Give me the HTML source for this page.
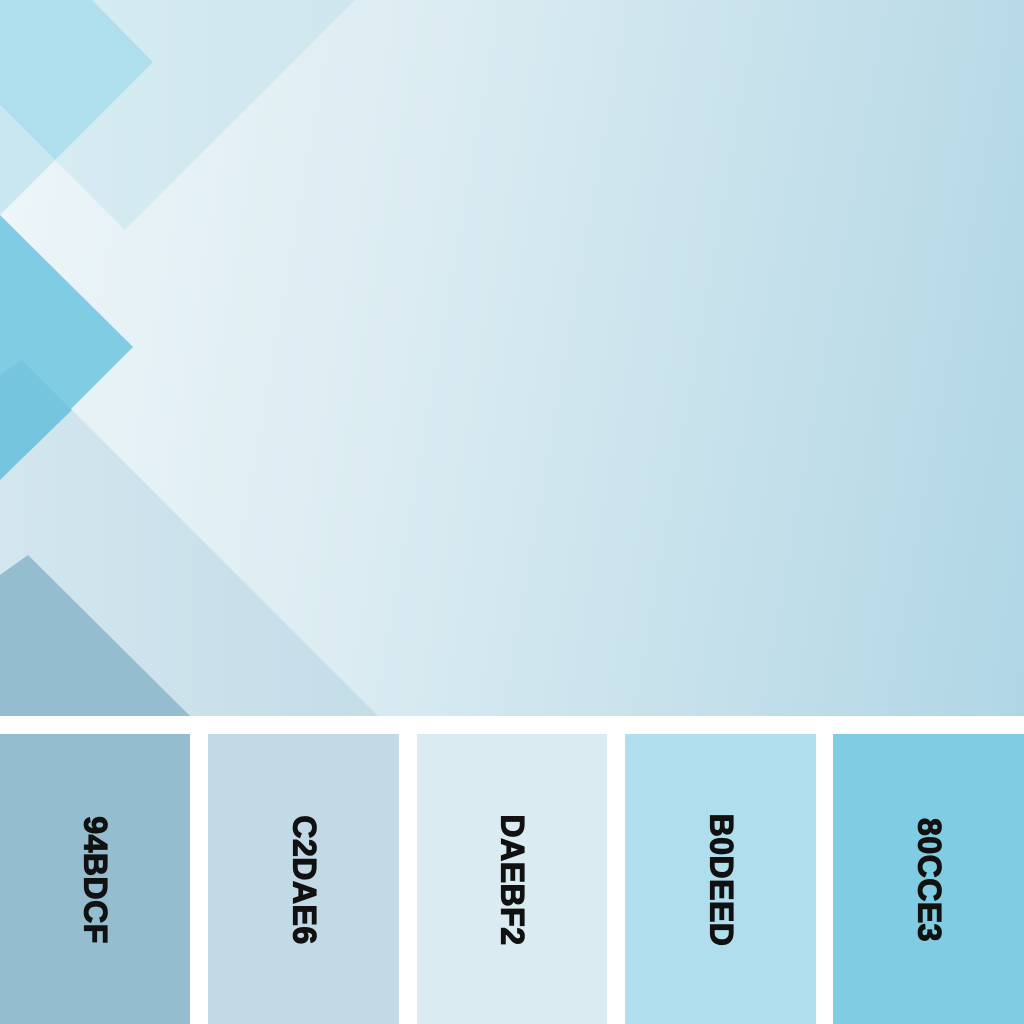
<!DOCTYPE html>
<html><head><style>
body{margin:0;width:1024px;height:1024px;background:#fff;position:relative;overflow:hidden;font-family:"Liberation Sans",sans-serif}
.top{position:absolute;left:0;top:0;width:1024px;height:716px;background:linear-gradient(100deg,#eef6f9 0%,#dbecf2 40%,#c6e1eb 70%,#b0d6e5 100%)}
.sw{position:absolute;top:734px;height:290px}
.sw span{position:absolute;left:50%;top:146px;transform:translate(-50%,-50%) rotate(90deg);font-weight:bold;font-size:32px;color:#111;white-space:nowrap;-webkit-text-stroke:1.2px #111;letter-spacing:0.5px}
</style></head><body>
<div class="top">
<svg width="1024" height="716" style="position:absolute;left:0;top:0">
<defs>
<linearGradient id="g1" x1="0" x2="1"><stop offset="0" stop-color="#d6ebf2"/><stop offset="1" stop-color="#cfe6ee"/></linearGradient>
<linearGradient id="g2" x1="0" x2="1"><stop offset="0" stop-color="#d3e6ee"/><stop offset="1" stop-color="#c3dde8"/></linearGradient>
</defs>
<polygon points="92,0 355,0 125,230 55,160" fill="url(#g1)"/>
<polygon points="0,0 92,0 153,62 55,160 0,105" fill="#afdfec"/>
<polygon points="0,105 55,160 0,215" fill="#c8e7f0"/>
<polygon points="72,410 378,716 0,716 0,480" fill="url(#g2)"/>
<polygon points="0,215 133,347 0,480" fill="#80cce3"/>
<polygon points="0,375 22,360 72,410 0,480" fill="#76c5de"/>
<polygon points="0,575 28,555 190,716 0,716" fill="#94bdcf"/>
</svg>
</div>
<div class="sw" style="left:0;width:190px;background:#94bdcf"><span>94BDCF</span></div>
<div class="sw" style="left:208px;width:191px;background:#c2dae6"><span>C2DAE6</span></div>
<div class="sw" style="left:417px;width:190px;background:#daebf2"><span>DAEBF2</span></div>
<div class="sw" style="left:625px;width:191px;background:#b0deed"><span>B0DEED</span></div>
<div class="sw" style="left:833px;width:191px;background:#80cce3"><span>80CCE3</span></div>
</body></html>
